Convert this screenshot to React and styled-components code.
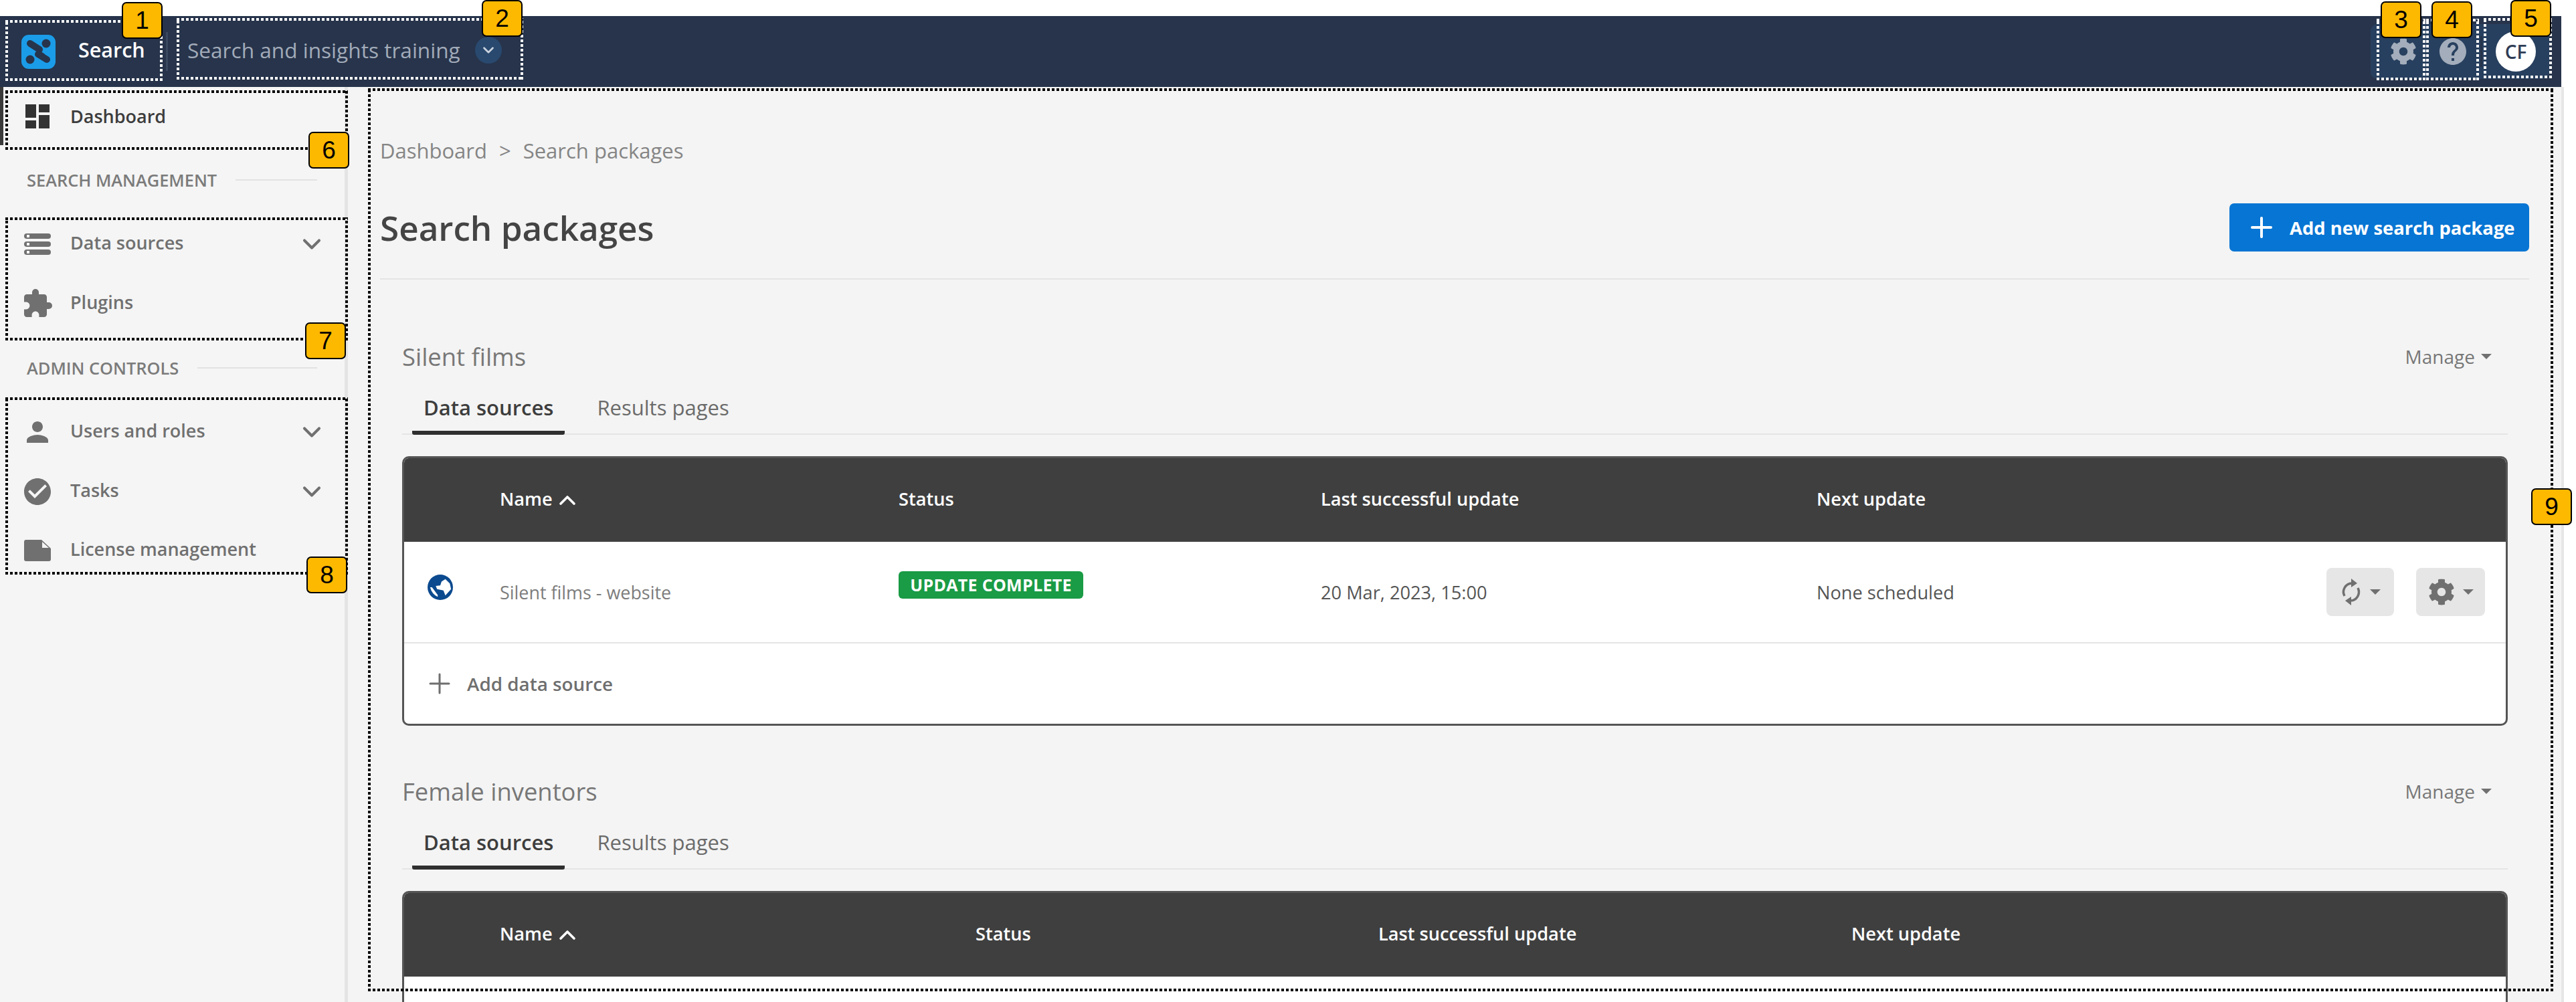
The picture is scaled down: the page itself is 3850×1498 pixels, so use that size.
import React from "react";
import styled, { createGlobalStyle, css } from "styled-components";
import { ChevronDown, ChevronUp, Plus } from "lucide-react";
import { FaCog } from "react-icons/fa";
import { MdDashboard, MdExtension, MdPerson, MdCheckCircle, MdHelp } from "react-icons/md";

const GlobalStyle = createGlobalStyle`
  html, body {
    margin: 0;
    background: #fff;
  }
  body {
    font-family: "Open Sans", "Liberation Sans", sans-serif;
  }
  * {
    box-sizing: border-box;
  }
`;

const Page = styled.div`
  position: relative;
  width: 3850px;
  height: 1498px;
  padding-top: 24px;
  overflow: hidden;
`;

const Frame = styled.div`
  width: 3828px;
`;

/* top bar */
const TopBar = styled.header`
  display: flex;
  align-items: center;
  height: 106px;
  background: #27344b;
`;

const LogoBox = styled.svg`
  width: 51px;
  height: 51px;
  margin-left: 32px;
  flex-shrink: 0;
`;

const AppName = styled.div`
  width: 131px;
  margin-left: 34px;
  margin-bottom: 6px;
  font-size: 30.5px;
  font-weight: 600;
  color: #fff;
`;

const VDivider = styled.div`
  width: 3px;
  height: 58px;
  background: #3b4960;
`;

const Workspace = styled.div`
  margin-left: 29px;
  margin-bottom: 6px;
  font-size: 31.6px;
  color: #a2abb9;
  white-space: nowrap;
`;

const RoundChevron = styled.div`
  display: flex;
  align-items: center;
  justify-content: center;
  width: 40px;
  height: 40px;
  margin-left: 22px;
  margin-bottom: 4px;
  border-radius: 50%;
  background: #29496f;
  color: #c9d2dd;
`;

const Tools = styled.div`
  display: flex;
  align-items: center;
  width: 267px;
  height: 82px;
  margin-left: auto;
  margin-right: 18px;
  padding-left: 12px;
  border-radius: 10px;
  background: #28405f;
`;

const ToolButton = styled.div`
  display: flex;
  align-items: center;
  justify-content: center;
  width: 74px;
  height: 100%;
  color: #a3adbb;
`;

const ToolSeparator = styled.div`
  width: 3px;
  height: 46px;
  margin-left: 4px;
  background: #27344b;
`;

const AvatarSlot = styled.div`
  flex: 1;
  display: flex;
  justify-content: center;
`;

const Avatar = styled.div`
  display: flex;
  align-items: center;
  justify-content: center;
  width: 60px;
  height: 60px;
  border-radius: 50%;
  background: #fff;
  color: #2f3c55;
  font-size: 28px;
  font-weight: 600;
`;

/* sidebar */
const Body = styled.div`
  display: flex;
  height: 1368px;
`;

const Sidebar = styled.nav`
  width: 520px;
  flex-shrink: 0;
  background: #f5f5f5;
  border-right: 5px solid #e4e4e4;
`;

const NavItem = styled.div`
  display: flex;
  align-items: center;
  height: ${(p) => (p.$active ? "87px" : "88.5px")};
  padding-left: ${(p) => (p.$active ? "31px" : "36px")};
  padding-right: 27px;
  color: ${(p) => (p.$active ? "#3d3d3d" : "#707070")};
  font-size: 27px;
  font-weight: 600;
  ${(p) =>
    p.$active &&
    css`
      border-left: 5px solid #3a3a3a;
    `}
`;

const NavIcon = styled.span`
  display: flex;
  align-items: center;
  justify-content: center;
  width: 40px;
  margin-right: 29px;
  svg {
    flex-shrink: 0;
  }
`;

const NavLabel = styled.span`
  margin-bottom: ${(p) => (p.$active ? "0" : "5px")};
`;

const NavChevron = styled(ChevronDown)`
  margin-left: auto;
`;

const NavHeading = styled.div`
  display: flex;
  align-items: center;
  height: 104px;
  padding: 0 41px 0 40px;
  gap: 28px;
  color: #7b7b7b;
  font-size: 25.4px;
  font-weight: 600;
  white-space: nowrap;
  &::after {
    content: "";
    flex: 1;
    height: 2px;
    background: #e2e2e2;
  }
`;

/* main column */
const Main = styled.main`
  flex: 1;
  min-width: 0;
  padding: 73px 48px 0;
  background: #f4f4f4;
  box-shadow: 4px 0 0 #e6e6e6;
`;

const Breadcrumb = styled.div`
  display: flex;
  align-items: center;
  gap: 18px;
  height: 44px;
  color: #858585;
  font-size: 31px;
`;

const TitleRow = styled.div`
  display: flex;
  align-items: center;
  justify-content: space-between;
  margin-top: 57px;
  padding-bottom: 40px;
  border-bottom: 2px solid #e4e4e4;
`;

const PageTitle = styled.h1`
  margin: 0;
  color: #444;
  font-size: 51.2px;
  font-weight: 600;
`;

const PrimaryButton = styled.button`
  display: flex;
  align-items: center;
  width: 448px;
  height: 72px;
  padding: 0 0 0 24px;
  border: 0;
  border-radius: 7px;
  background: #0775d3;
  color: #fff;
  font-family: inherit;
  font-size: 27.4px;
  font-weight: 700;
  gap: 18px;
`;

const Section = styled.section`
  margin-top: ${(p) => (p.$first ? "92px" : "75px")};
  padding: 0 32px 0 33px;
`;

const SectionHead = styled.div`
  display: flex;
  align-items: center;
  justify-content: space-between;
  height: 50px;
  padding-bottom: 4px;
`;

const SectionTitle = styled.h2`
  margin: 0;
  color: #777;
  font-size: 36.4px;
  font-weight: 400;
`;

const ManageLink = styled.div`
  display: flex;
  align-items: center;
  gap: 9px;
  margin-right: 24px;
  color: #777;
  font-size: 28px;
`;

const Caret = styled.span`
  width: 0;
  height: 0;
  border-left: 8px solid transparent;
  border-right: 8px solid transparent;
  border-top: 8px solid #707070;
`;

const TabBar = styled.div`
  display: flex;
  gap: 31px;
  height: 90px;
  padding-left: 15px;
  border-bottom: 2px solid #e4e4e4;
`;

const Tab = styled.div`
  height: 90px;
  padding: 28px 17px 0;
  color: ${(p) => (p.$active ? "#3d3d3d" : "#6b6b6b")};
  font-size: 31px;
  font-weight: ${(p) => (p.$active ? 600 : 400)};
  line-height: 42px;
  border-bottom: 6px solid ${(p) => (p.$active ? "#2f2f2f" : "transparent")};
  border-radius: 0 0 3px 3px;
`;

const Table = styled.div`
  margin-top: 32px;
  overflow: hidden;
  border: 3px solid #555;
  border-radius: 10px;
  background: #fff;
`;

const HeadRow = styled.div`
  display: grid;
  grid-template-columns: ${(p) => p.$cols};
  align-items: center;
  height: 128px;
  margin: -3px -3px 0;
  padding-bottom: 2px;
  background: #3f3f3f;
  color: #fff;
  font-size: 27.2px;
  font-weight: 600;
`;

const SortLabel = styled.div`
  display: flex;
  align-items: center;
  gap: 2px;
  svg {
    margin-top: 6px;
  }
`;

const DataRow = styled.div`
  display: grid;
  grid-template-columns: ${(p) => p.$cols};
  align-items: center;
  height: 152px;
  margin: 0 -3px;
  border-bottom: 2px solid #e4e4e4;
  color: #555;
  font-size: 27.2px;
`;

const RowIcon = styled.svg`
  display: block;
  width: 38px;
  height: 38px;
  margin-left: 38px;
  margin-bottom: 14px;
`;

const SourceName = styled.div`
  color: #7d7d7d;
  font-size: 26.9px;
`;

const StatusCell = styled.div`
  display: flex;
  margin-bottom: 22px;
`;

const StatusBadge = styled.span`
  display: inline-flex;
  align-items: center;
  justify-content: center;
  width: 276px;
  height: 41px;
  border-radius: 6px;
  background: #1a9b45;
  color: #fff;
  font-size: 25px;
  font-weight: 700;
  letter-spacing: 0.3px;
`;

const RowActions = styled.div`
  display: flex;
  justify-content: flex-end;
  gap: 33px;
  padding-right: 34px;
`;

const ActionButton = styled.div`
  display: flex;
  align-items: center;
  justify-content: center;
  gap: 12px;
  width: ${(p) => p.$w}px;
  height: 72px;
  border-radius: 8px;
  background: #e6e6e6;
  color: #707070;
`;

const AddRow = styled.div`
  display: flex;
  align-items: center;
  height: 120px;
  padding-left: 29px;
  gap: 17px;
  color: #6f6f6f;
  font-size: 27.8px;
  font-weight: 600;
`;

/* annotation layer */
const dots = (color, dir) =>
  `repeating-linear-gradient(${dir}, ${color} 0 4px, transparent 4px 7px)`;

const Callout = styled.div`
  position: absolute;
  left: ${(p) => p.$x}px;
  top: ${(p) => p.$y}px;
  width: ${(p) => p.$w}px;
  height: ${(p) => p.$h}px;
  background-image: ${(p) => dots(p.$color, "90deg")}, ${(p) => dots(p.$color, "90deg")},
    ${(p) => dots(p.$color, "0deg")}, ${(p) => dots(p.$color, "0deg")};
  background-size: 100% 4px, 100% 4px, 4px 100%, 4px 100%;
  background-position: 0 0, 0 100%, 0 0, 100% 0;
  background-repeat: no-repeat;
  pointer-events: none;
`;

const Badge = styled.div`
  position: absolute;
  left: ${(p) => p.$x}px;
  top: ${(p) => p.$y}px;
  display: flex;
  align-items: center;
  justify-content: center;
  width: 61px;
  height: 55px;
  border: 2px solid #000;
  border-radius: 7px;
  background: #fdb900;
  color: #000;
  font-family: "Liberation Sans", Arial, sans-serif;
  font-size: 37px;
`;

const Logo = () => (
  <LogoBox viewBox="0 0 51 51">
    <rect width="51" height="51" rx="11" fill="#1b9ce8" />
    <path d="M13 13 L27 22" stroke="#27344b" strokeWidth="10" strokeLinecap="round" />
    <path d="M25 29 L38 37" stroke="#27344b" strokeWidth="10" strokeLinecap="round" />
    <path d="M19 20 L34 30" stroke="#27344b" strokeWidth="3" />
    <circle cx="37" cy="13" r="6.5" fill="#27344b" />
    <circle cx="13" cy="37" r="6.5" fill="#27344b" />
  </LogoBox>
);

const ServerIcon = () => (
  <svg width="40" height="32" viewBox="0 0 40 32" fill="#707070">
    <rect x="0" y="0" width="40" height="8" rx="4" />
    <rect x="0" y="12" width="40" height="8" rx="4" />
    <rect x="0" y="24" width="40" height="8" rx="4" />
    <rect x="4" y="2" width="4" height="4" fill="#f5f5f5" />
    <rect x="4" y="14" width="4" height="4" fill="#f5f5f5" />
    <rect x="4" y="26" width="4" height="4" fill="#f5f5f5" />
  </svg>
);

const LicenseIcon = () => (
  <svg width="40" height="32" viewBox="0 0 40 32" fill="#707070">
    <path d="M3 0 H26 L40 13 V29 a3 3 0 0 1 -3 3 H3 a3 3 0 0 1 -3 -3 V3 a3 3 0 0 1 3 -3 Z" />
    <path d="M27 3 L37 12 H27 Z" fill="#f5f5f5" />
  </svg>
);

const Globe = () => (
  <RowIcon viewBox="0 0 40 40">
    <circle cx="20" cy="20" r="20" fill="#0b4a8f" />
    <path d="M13 18 L20 17 L22 11 L28 7 L35 14 L37 23 L28 33 L25 25 L15 23 Z" fill="#fff" />
    <path d="M4 20 L7 20 L16 32 L16 35 Q7 31 4 20 Z" fill="#fff" />
  </RowIcon>
);

const SyncIcon = () => (
  <svg width="32" height="42" viewBox="0 0 32 42" fill="none">
    <path d="M17 8 A13 13 0 0 0 6 27" stroke="#707070" strokeWidth="3.5" />
    <path d="M15 34 A13 13 0 0 0 26 15" stroke="#707070" strokeWidth="3.5" />
    <path d="M16 1 L25 8 L16 14 Z" fill="#707070" />
    <path d="M16 28 L7 34 L16 41 Z" fill="#707070" />
  </svg>
);

const firstCols = "146px 596px 631px 741px 1fr auto";
const secondCols = "146px 711px 602px 707px 1fr auto";

const callouts = [
  { x: 8, y: 30, w: 235, h: 91, color: "#fff" },
  { x: 264, y: 27, w: 518, h: 92, color: "#fff" },
  { x: 3552, y: 28, w: 73, h: 92, color: "#fff" },
  { x: 3626, y: 28, w: 79, h: 92, color: "#fff" },
  { x: 3712, y: 27, w: 102, h: 90, color: "#fff" },
  { x: 8, y: 135, w: 512, h: 89, color: "#000" },
  { x: 8, y: 325, w: 512, h: 184, color: "#000" },
  { x: 8, y: 594, w: 512, h: 265, color: "#000" },
  { x: 550, y: 132, w: 3266, h: 1350, color: "#000" },
];

const badges = [
  { n: 1, x: 182, y: 3 },
  { n: 2, x: 720, y: 0 },
  { n: 3, x: 3558, y: 2 },
  { n: 4, x: 3634, y: 2 },
  { n: 5, x: 3752, y: 0 },
  { n: 6, x: 461, y: 197 },
  { n: 7, x: 456, y: 482 },
  { n: 8, x: 458, y: 832 },
  { n: 9, x: 3783, y: 730 },
];

const PackageHead = ({ title }) => (
  <>
    <SectionHead>
      <SectionTitle>{title}</SectionTitle>
      <ManageLink>
        Manage <Caret />
      </ManageLink>
    </SectionHead>
    <TabBar>
      <Tab $active>Data sources</Tab>
      <Tab>Results pages</Tab>
    </TabBar>
  </>
);

const TableHead = ({ cols }) => (
  <HeadRow $cols={cols}>
    <div />
    <SortLabel>
      Name <ChevronUp size={40} strokeWidth={2.2} />
    </SortLabel>
    <div>Status</div>
    <div>Last successful update</div>
    <div>Next update</div>
  </HeadRow>
);

const App = () => {
  return (
    <Page>
      <GlobalStyle />
      <Frame>
        <TopBar>
          <Logo />
          <AppName>Search</AppName>
          <VDivider />
          <Workspace>Search and insights training</Workspace>
          <RoundChevron>
            <ChevronDown size={26} strokeWidth={2.5} />
          </RoundChevron>
          <Tools>
            <ToolButton>
              <FaCog size={40} />
            </ToolButton>
            <ToolButton>
              <MdHelp size={48} />
            </ToolButton>
            <ToolSeparator />
            <AvatarSlot>
              <Avatar>CF</Avatar>
            </AvatarSlot>
          </Tools>
        </TopBar>
        <Body>
          <Sidebar>
            <NavItem $active>
              <NavIcon>
                <MdDashboard size={48} color="#333" />
              </NavIcon>
              <NavLabel $active>Dashboard</NavLabel>
            </NavItem>
            <NavHeading>SEARCH MANAGEMENT</NavHeading>
            <NavItem>
              <NavIcon>
                <ServerIcon />
              </NavIcon>
              <NavLabel>Data sources</NavLabel>
              <NavChevron size={44} strokeWidth={2.2} />
            </NavItem>
            <NavItem>
              <NavIcon>
                <MdExtension size={48} />
              </NavIcon>
              <NavLabel>Plugins</NavLabel>
            </NavItem>
            <NavHeading>ADMIN CONTROLS</NavHeading>
            <NavItem>
              <NavIcon>
                <MdPerson size={48} />
              </NavIcon>
              <NavLabel>Users and roles</NavLabel>
              <NavChevron size={44} strokeWidth={2.2} />
            </NavItem>
            <NavItem>
              <NavIcon>
                <MdCheckCircle size={48} />
              </NavIcon>
              <NavLabel>Tasks</NavLabel>
              <NavChevron size={44} strokeWidth={2.2} />
            </NavItem>
            <NavItem>
              <NavIcon>
                <LicenseIcon />
              </NavIcon>
              <NavLabel>License management</NavLabel>
            </NavItem>
          </Sidebar>
          <Main>
            <Breadcrumb>
              <span>Dashboard</span>
              <span>&gt;</span>
              <span>Search packages</span>
            </Breadcrumb>
            <TitleRow>
              <PageTitle>Search packages</PageTitle>
              <PrimaryButton>
                <Plus size={48} strokeWidth={2} />
                Add new search package
              </PrimaryButton>
            </TitleRow>
            <Section $first>
              <PackageHead title="Silent films" />
              <Table>
                <TableHead cols={firstCols} />
                <DataRow $cols={firstCols}>
                  <Globe />
                  <SourceName>Silent films - website</SourceName>
                  <StatusCell>
                    <StatusBadge>UPDATE COMPLETE</StatusBadge>
                  </StatusCell>
                  <div>20 Mar, 2023, 15:00</div>
                  <div>None scheduled</div>
                  <RowActions>
                    <ActionButton $w={101}>
                      <SyncIcon />
                      <Caret />
                    </ActionButton>
                    <ActionButton $w={103}>
                      <FaCog size={40} />
                      <Caret />
                    </ActionButton>
                  </RowActions>
                </DataRow>
                <AddRow>
                  <Plus size={48} strokeWidth={1.5} />
                  Add data source
                </AddRow>
              </Table>
            </Section>
            <Section>
              <PackageHead title="Female inventors" />
              <Table>
                <TableHead cols={secondCols} />
                <DataRow $cols={secondCols} />
              </Table>
            </Section>
          </Main>
        </Body>
      </Frame>
      {callouts.map((c, i) => (
        <Callout key={i} $x={c.x} $y={c.y} $w={c.w} $h={c.h} $color={c.color} />
      ))}
      {badges.map((b) => (
        <Badge key={b.n} $x={b.x} $y={b.y}>
          {b.n}
        </Badge>
      ))}
    </Page>
  );
};

export default App;
